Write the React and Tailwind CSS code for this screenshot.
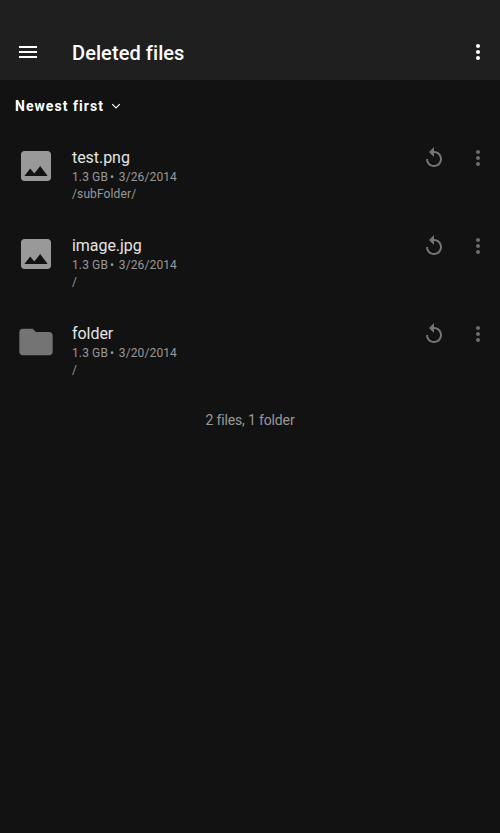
const files = [
  { name: 'test.png', date: '3/26/2014', path: '/subFolder/', kind: 'image' },
  { name: 'image.jpg', date: '3/26/2014', path: '/', kind: 'image' },
  { name: 'folder', date: '3/20/2014', path: '/', kind: 'folder' },
];

const IMAGE = 'M21 19V5c0-1.1-.9-2-2-2H5c-1.1 0-2 .9-2 2v14c0 1.1.9 2 2 2h14c1.1 0 2-.9 2-2zM8.5 13.5l2.5 3.01L14.5 12l4.5 6H5l3.5-4.5z';
const FOLDER = 'M10 4H4c-1.1 0-1.99.9-1.99 2L2 18c0 1.1.9 2 2 2h16c1.1 0 2-.9 2-2V8c0-1.1-.9-2-2-2h-8l-2-2z';
const RESTORE = 'M12 5V1L7 6l5 5V7c3.31 0 6 2.69 6 6s-2.69 6-6 6-6-2.69-6-6H4c0 4.42 3.58 8 8 8s8-3.58 8-8-3.58-8-8-8z';
const MORE = 'M12 8c1.1 0 2-.9 2-2s-.9-2-2-2-2 .9-2 2 .9 2 2 2zm0 2c-1.1 0-2 .9-2 2s.9 2 2 2 2-.9 2-2-.9-2-2-2zm0 6c-1.1 0-2 .9-2 2s.9 2 2 2 2-.9 2-2-.9-2-2-2z';
const MENU = 'M3 18h18v-2H3v2zm0-5h18v-2H3v2zm0-7v2h18V6H3z';

function Icon({ d, className }) {
  return (
    <svg viewBox="0 0 24 24" fill="currentColor" className={`shrink-0 ${className}`}>
      <path d={d} />
    </svg>
  );
}

function FileRow({ file }) {
  return (
    <li className="flex h-[88px] items-start pl-4 pr-2.5 pt-3">
      <Icon
        d={file.kind === 'image' ? IMAGE : FOLDER}
        className={file.kind === 'image' ? 'size-10 text-[#999999]' : 'size-10 text-[#747474]'}
      />
      <div className="ml-4 flex-1 pt-0.5">
        <div className="h-5 text-base leading-5 tracking-[-0.05px] text-[#e4e4e4]">{file.name}</div>
        <div className="mt-px h-[17px] text-xs leading-[17px] tracking-[0.12px] text-[#999999]">
          1.3 GB<span className="ml-[2px] mr-[1.5px]">•</span> {file.date}
        </div>
        <div className="h-[17px] text-xs leading-[17px] tracking-[0.12px] text-[#999999]">{file.path}</div>
      </div>
      <Icon d={RESTORE} className="mr-5 size-6 text-[#757575]" />
      <Icon d={MORE} className="size-6 text-[#6c6c6c]" />
    </li>
  );
}

export default function App() {
  return (
    <div className="h-[833px] w-[500px] overflow-hidden bg-[#121212] font-['Roboto',sans-serif]">
      <header className="flex h-20 items-center bg-[#1f1f1f] pl-4 pr-2.5 pt-6 text-white">
        <Icon d={MENU} className="size-6" />
        <h1 className="ml-8 mt-0.5 flex-1 text-xl font-medium leading-6 tracking-[0.08px]">Deleted files</h1>
        <Icon d={MORE} className="size-6" />
      </header>
      <div className="flex h-[54px] items-center pb-0.5 pl-[15px] text-white">
        <span className="text-sm font-bold tracking-[1.05px]">Newest first</span>
        <svg viewBox="0 0 12 12" className="ml-1.5 size-3" fill="none" stroke="currentColor" strokeWidth="1.2">
          <path d="M2.2 4.2 6 8 9.8 4.2" />
        </svg>
      </div>
      <ul>
        {files.map((file) => <FileRow key={file.name} file={file} />)}
      </ul>
      <p className="mt-3 text-center text-sm leading-5 tracking-[-0.15px] text-[#999999]">2 files, 1 folder</p>
    </div>
  );
}
